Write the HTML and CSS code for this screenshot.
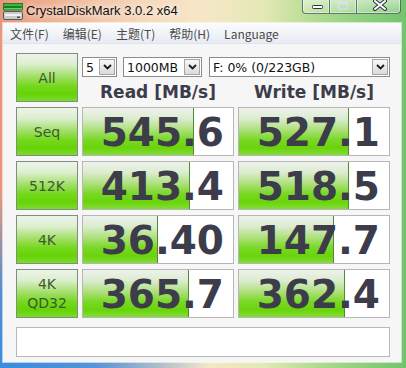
FILE: index.html
```html
<!DOCTYPE html>
<html>
<head>
<meta charset="utf-8">
<link rel="stylesheet" href="styles.css">
</head>
<body>
<div class="frame">
  <div class="titlebar">
    <svg class="app-icon" width="20" height="17" viewBox="0 0 20 17">
      <rect x="0.5" y="0.5" width="19" height="3" fill="#3cb83c" stroke="#1f7a2a"/>
      <rect x="0.5" y="4.5" width="19" height="2.5" fill="#5fd05a" stroke="#1f7a2a"/>
      <rect x="0.5" y="8.5" width="19" height="8" rx="1.5" fill="#c8ccd0" stroke="#55595e"/>
      <rect x="2" y="11" width="16" height="2" fill="#eef0f2"/>
      <rect x="14" y="13.5" width="3" height="1.5" fill="#4a4e54"/>
    </svg>
    <span class="title">CrystalDiskMark 3.0.2 x64</span>
    <div class="caption">
      <div class="cbtn cmin">
        <svg width="26" height="14" viewBox="0 0 26 14"><rect x="9.5" y="6.5" width="10" height="3" rx="0.8" fill="#ffffff" stroke="#2c3440"/></svg>
      </div>
      <div class="cbtn cmax">
        <svg width="26" height="14" viewBox="0 0 26 14"><rect x="8.5" y="3.5" width="9" height="6.5" fill="none" stroke="#d6e2ee" stroke-width="1.2"/><rect x="8.5" y="3.5" width="9" height="1.8" fill="#d6e2ee"/></svg>
      </div>
      <div class="cbtn cclose">
        <svg width="43" height="14" viewBox="0 0 43 14"><path d="M18 2 L28 10 M28 2 L18 10" stroke="#2c3440" stroke-width="4" stroke-linecap="round"/><path d="M18 2 L28 10 M28 2 L18 10" stroke="#ffffff" stroke-width="2" stroke-linecap="round"/></svg>
      </div>
    </div>
  </div>
  <div class="client">
    <div class="menubar">
      <span>文件(F)</span>
      <span>编辑(E)</span>
      <span>主题(T)</span>
      <span>帮助(H)</span>
      <span>Language</span>
    </div>
    <div class="panel">
      <div class="btn">All</div>
      <div class="controls">
        <div class="selects">
          <div class="select s-count"><span class="val">5</span><span class="arrow"><svg width="9" height="6" viewBox="0 0 9 6"><path d="M1 1 L4.5 4.5 L8 1" fill="none" stroke="#1c1c1c" stroke-width="1.8"/></svg></span></div>
          <div class="select s-size"><span class="val">1000MB</span><span class="arrow"><svg width="9" height="6" viewBox="0 0 9 6"><path d="M1 1 L4.5 4.5 L8 1" fill="none" stroke="#1c1c1c" stroke-width="1.8"/></svg></span></div>
          <div class="select s-drive"><span class="val">F: 0% (0/223GB)</span><span class="arrow"><svg width="9" height="6" viewBox="0 0 9 6"><path d="M1 1 L4.5 4.5 L8 1" fill="none" stroke="#1c1c1c" stroke-width="1.8"/></svg></span></div>
        </div>
        <div class="headers">
          <div>Read [MB/s]</div>
          <div>Write [MB/s]</div>
        </div>
      </div>

      <div class="btn">Seq</div>
      <div class="cell"><div class="bar" style="width:74%"></div><div class="num">545.6</div></div>
      <div class="cell"><div class="bar" style="width:73.5%"></div><div class="num">527.1</div></div>

      <div class="btn">512K</div>
      <div class="cell"><div class="bar" style="width:71.5%"></div><div class="num">413.4</div></div>
      <div class="cell"><div class="bar" style="width:73.5%"></div><div class="num">518.5</div></div>

      <div class="btn">4K</div>
      <div class="cell"><div class="bar" style="width:50%"></div><div class="num">36.40</div></div>
      <div class="cell"><div class="bar" style="width:63%"></div><div class="num">147.7</div></div>

      <div class="btn two">4K<br>QD32</div>
      <div class="cell"><div class="bar" style="width:70.5%"></div><div class="num">365.7</div></div>
      <div class="cell"><div class="bar" style="width:70.5%"></div><div class="num">362.4</div></div>

      <div class="comment"></div>
    </div>
  </div>
</div>
</body>
</html>
```

FILE: styles.css
```css
html, body {
  margin: 0;
  padding: 0;
}

body {
  width: 406px;
  height: 368px;
  overflow: hidden;
  background:
    radial-gradient(ellipse 210px 175px at 0% 100%, #3a8ce0 0%, rgba(58, 140, 224, 0.85) 45%, rgba(58, 140, 224, 0) 100%),
    linear-gradient(to right, #e8977a 0%, #efb595 15%, #f5d8bb 35%, #f6e7c8 50%, #e4e8b5 65%, #a9d98a 80%, #72c46c 100%);
}

.frame {
  display: flex;
  flex-direction: column;
  height: 368px;
}

/* ---------- title bar ---------- */
.titlebar {
  height: 23px;
  display: flex;
  align-items: flex-start;
  flex: none;
}

.app-icon {
  margin: 3px 0 0 3px;
  flex: none;
}

.title {
  margin: 3px 0 0 3px;
  font-family: "Liberation Sans", Arial, sans-serif;
  font-size: 13px;
  line-height: 16px;
  color: #111;
  text-shadow: 0 0 6px rgba(255, 255, 255, 0.95), 0 0 10px rgba(255, 255, 255, 0.8);
}

.caption {
  margin-left: auto;
  margin-right: 5px;
  margin-top: -1px;
  display: flex;
  height: 15px;
}

.cbtn {
  box-sizing: border-box;
  height: 15px;
  border: 1px solid rgba(40, 55, 75, 0.65);
  border-top: none;
  background: linear-gradient(rgba(255, 255, 255, 0.55), rgba(255, 255, 255, 0.2));
  box-shadow: inset 0 0 0 1px rgba(255, 255, 255, 0.45);
  display: flex;
  justify-content: center;
}

.cbtn svg {
  display: block;
}

.cmin {
  width: 28px;
  border-bottom-left-radius: 4px;
}

.cmax {
  width: 27px;
  border-left: none;
}

.cclose {
  width: 44px;
  border-left: none;
  border-bottom-right-radius: 4px;
}

/* ---------- client ---------- */
.client {
  flex: 1;
  margin: 0 5px 6px 3px;
  background: #f6f6f6;
  box-shadow: 0 0 0 1px rgba(255, 255, 255, 0.6);
  display: flex;
  flex-direction: column;
}

.menubar {
  height: 21px;
  box-sizing: border-box;
  display: flex;
  align-items: center;
  gap: 14px;
  padding-left: 7px;
  background: linear-gradient(#fbfcfe, #e7ebf2);
  border-bottom: 1px solid #dfe3ea;
  font-family: "Noto Sans CJK SC", "Liberation Sans", sans-serif;
  font-size: 12px;
  color: #4a4a4a;
}

.panel {
  display: grid;
  grid-template-columns: 62px 152px 152px;
  grid-template-rows: repeat(5, 49px) auto;
  column-gap: 4px;
  row-gap: 5px;
  padding: 9px 0 0 13px;
}

.btn {
  box-sizing: border-box;
  border: 1px solid #7f8f7f;
  background: linear-gradient(to bottom, #eef3ea 0%, #dcefcf 22%, #a7e070 46%, #74d81c 68%, #66d306 85%, #7cdb2e 100%);
  display: flex;
  align-items: center;
  justify-content: center;
  text-align: center;
  font-family: "DejaVu Sans", Verdana, sans-serif;
  font-size: 14px;
  color: #3c5a2e;
}

.btn.two {
  line-height: 19px;
  padding-top: 1px;
}

.controls {
  grid-column: 2 / 4;
  display: flex;
  flex-direction: column;
}

.selects {
  display: flex;
  margin-top: 4px;
  height: 20px;
}

.select {
  box-sizing: border-box;
  height: 20px;
  border: 1px solid #8c8c8c;
  background: #ffffff;
  display: flex;
  align-items: center;
  padding-right: 1px;
  font-family: "DejaVu Sans", Verdana, sans-serif;
  font-size: 12.5px;
  color: #111;
}

.select .val {
  flex: 1;
  padding-left: 3px;
  white-space: nowrap;
}

.select .arrow {
  box-sizing: border-box;
  width: 16px;
  height: 16px;
  border: 1px solid #a6a6a6;
  background: linear-gradient(#f8f8f8, #dadada);
  display: flex;
  align-items: center;
  justify-content: center;
}

.select .arrow svg {
  display: block;
}

.s-count {
  width: 35px;
}

.s-size {
  width: 79px;
  margin-left: 6px;
}

.s-drive {
  width: 181px;
  margin-left: 7px;
}

.headers {
  margin-top: auto;
  display: grid;
  grid-template-columns: 152px 152px;
  column-gap: 4px;
  text-align: center;
  font-family: "DejaVu Sans", Verdana, sans-serif;
  font-weight: bold;
  font-size: 17px;
  line-height: 20px;
  color: #3c3c4a;
}

.cell {
  box-sizing: border-box;
  border: 1px solid #b6b6b6;
  background: #ffffff;
  display: grid;
  overflow: hidden;
}

.bar {
  grid-area: 1 / 1;
  justify-self: start;
  box-sizing: border-box;
  border-right: 1px solid #4f8c34;
  background: linear-gradient(to bottom, #eef2ec 0%, #dcecd0 22%, #aee07c 46%, #78d824 68%, #6ad40a 85%, #84dc3a 100%);
}

.num {
  grid-area: 1 / 1;
  text-align: right;
  padding: 3px 9px 0 0;
  font-family: "DejaVu Sans", Verdana, sans-serif;
  font-weight: bold;
  font-size: 39px;
  line-height: 44px;
  color: #3c3c4a;
  white-space: nowrap;
}

.comment {
  grid-column: 1 / -1;
  box-sizing: border-box;
  height: 30px;
  margin-top: 4px;
  border: 1px solid #b8b8b8;
  background: #ffffff;
}
```
